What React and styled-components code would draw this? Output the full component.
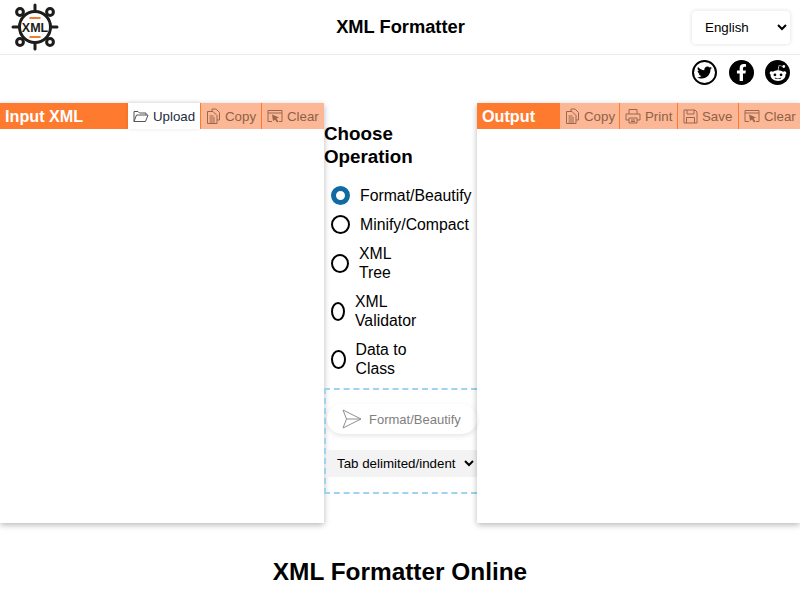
import styled, { createGlobalStyle } from 'styled-components'
import { FaTwitter, FaFacebookF, FaRedditAlien } from 'react-icons/fa'

const GlobalStyle = createGlobalStyle`
  html, body {
    margin: 0;
    padding: 0;
    background: #fff;
    font-family: "Liberation Sans", Arial, sans-serif;
    color: #000;
  }
  * {
    box-sizing: border-box;
  }
`

const Logo = () => (
  <svg width="48" height="48" viewBox="0 0 48 48">
    <g stroke="#1d1d1b" strokeWidth="3" strokeLinecap="round" fill="none">
      <line x1="24" y1="2" x2="24" y2="46" />
      <line x1="2" y1="24" x2="46" y2="24" />
      <line x1="9" y1="9" x2="39" y2="39" />
      <line x1="39" y1="9" x2="9" y2="39" />
      <circle cx="24" cy="24" r="15.500" fill="#fff" />
      <circle cx="9" cy="9" r="3.400" fill="#fff" />
      <circle cx="39" cy="9" r="3.400" fill="#fff" />
      <circle cx="9" cy="39" r="3.400" fill="#fff" />
      <circle cx="39" cy="39" r="3.400" fill="#fff" />
    </g>
    <rect x="18.500" y="14" width="11" height="2" fill="#f47a30" />
    <rect x="18.500" y="33" width="11" height="2" fill="#f47a30" />
    <text x="24" y="28.500" textAnchor="middle" fontFamily="Liberation Sans" fontWeight="700" fontSize="12.500" fill="#1d1d1b">XML</text>
  </svg>
)

const UploadIcon = () => (
  <svg width="16" height="14" viewBox="0 0 16 14" fill="none" stroke="#555" strokeWidth="1">
    <path d="M1 12.500V2.500h4l1.500 1.500H13v2" />
    <path d="M1 12.500L3.500 6h11.500l-2.500 6.500z" />
  </svg>
)

const CopyIcon = () => (
  <ToolGlyph width="15" height="16" viewBox="0 0 15 16">
    <path d="M6 3V1h4l3.500 3.500V12H11" />
    <path d="M1.500 3.500H7l4 4v8H1.500z" />
    <path d="M3.500 8h4M3.500 10h5.500M3.500 12h5.500M3.500 14h5.500" />
  </ToolGlyph>
)

const ClearIcon = () => (
  <ToolGlyph width="16" height="15" viewBox="0 0 16 15">
    <path d="M12 12.500h3v-11H1v11h4M1 4h14" />
    <path d="M5 5.500l7 3-2.500 1 2 3-1.500 1-2-3-2 1.500z" fill="#7a4c34" stroke="none" />
  </ToolGlyph>
)

const PrintIcon = () => (
  <ToolGlyph width="16" height="16" viewBox="0 0 16 16">
    <path d="M4 6V1.500h8V6" />
    <path d="M4 12H1V6h14v6h-3" />
    <path d="M4 10h8v5H4zM6 12h4M6 13.500h4" />
  </ToolGlyph>
)

const SaveIcon = () => (
  <ToolGlyph width="15" height="15" viewBox="0 0 15 15">
    <path d="M1 1h11l2 2v11H1z" />
    <path d="M4 1v4h7V1M3.500 14V8.500h8V14" />
  </ToolGlyph>
)

const SendIcon = () => (
  <svg width="20" height="20" viewBox="0 0 20 20" fill="none" stroke="#8f8f8f" strokeWidth="1">
    <path d="M1 1l18 9-18 9 3.500-9z" />
    <path d="M4.500 10H19" />
  </svg>
)

const operations = [
  { label: 'Format/Beautify', checked: true, radioWidth: 19 },
  { label: 'Minify/Compact', radioWidth: 19 },
  { label: 'XML Tree', radioWidth: 18, wrapAt: 50 },
  { label: 'XML Validator', radioWidth: 14, wrapAt: 70 },
  { label: 'Data to Class', radioWidth: 14.500, wrapAt: 70 },
]

const App = () => (
  <Page>
    <GlobalStyle />
    <Header>
      <LogoSlot>
        <Logo />
      </LogoSlot>
      <SiteTitle>XML Formatter</SiteTitle>
      <Language defaultValue="English">
        <option>English</option>
        <option>Español</option>
      </Language>
    </Header>
    <Socials>
      <Social $outline>
        <FaTwitter size={15} />
      </Social>
      <Social>
        <FaFacebookF size={17} />
      </Social>
      <Social>
        <FaRedditAlien size={18} />
      </Social>
    </Socials>
    <Workspace>
      <InputPanel>
        <PanelBar>
          <PanelLabel $w={128}>Input XML</PanelLabel>
          <UploadButton>
            <UploadIcon />
            Upload
          </UploadButton>
          <ToolButton $w={61}>
            <CopyIcon />
            Copy
          </ToolButton>
          <ToolButton $w={63}>
            <ClearIcon />
            Clear
          </ToolButton>
        </PanelBar>
      </InputPanel>
      <Operations>
        <OperationsTitle>Choose Operation</OperationsTitle>
        <OperationList>
          {operations.map(op => (
            <Operation key={op.label} $tall={!!op.wrapAt}>
              <Radio $checked={op.checked} $w={op.radioWidth} />
              <OperationName $wrapAt={op.wrapAt}>{op.label}</OperationName>
            </Operation>
          ))}
        </OperationList>
        <ActionBox>
          <RunButton>
            <SendIcon />
            Format/Beautify
          </RunButton>
          <Indent defaultValue="tab">
            <option value="tab">Tab delimited/indent</option>
            <option value="2">2 spaces</option>
          </Indent>
        </ActionBox>
      </Operations>
      <OutputPanel>
        <PanelBar>
          <PanelLabel $w={82}>Output</PanelLabel>
          <ToolButton $w={60}>
            <CopyIcon />
            Copy
          </ToolButton>
          <ToolButton $w={58}>
            <PrintIcon />
            Print
          </ToolButton>
          <ToolButton $w={61}>
            <SaveIcon />
            Save
          </ToolButton>
          <ToolButton $w={62}>
            <ClearIcon />
            Clear
          </ToolButton>
        </PanelBar>
      </OutputPanel>
    </Workspace>
    <PageHeading>XML Formatter Online</PageHeading>
  </Page>
)

export default App

const Page = styled.div`
  width: 800px;
  height: 600px;
  overflow: hidden;
`

const Header = styled.header`
  height: 55px;
  padding: 0 10px 0 11px;
  display: grid;
  grid-template-columns: 1fr auto 1fr;
  align-items: center;
  border-bottom: 1px solid #e3edf2;
`

const LogoSlot = styled.div`
  display: flex;
  align-items: center;
`

const SiteTitle = styled.h1`
  margin: 0;
  font-size: 18.300px;
  font-weight: 700;
`

const Language = styled.select`
  justify-self: end;
  width: 98px;
  height: 33px;
  padding-left: 9px;
  border: 0;
  border-radius: 4px;
  background: #fff;
  box-shadow: 0 0 4px rgba(0, 0, 0, 0.14);
  font-family: inherit;
  font-size: 13.330px;
`

const Socials = styled.div`
  height: 48px;
  padding: 5px 10px 0 0;
  display: flex;
  justify-content: flex-end;
  gap: 11.500px;
`

const Social = styled.a`
  width: 25px;
  height: 25px;
  border-radius: 50%;
  display: flex;
  align-items: center;
  justify-content: center;
  background: ${p => (p.$outline ? '#fff' : '#000')};
  color: ${p => (p.$outline ? '#000' : '#fff')};
  border: ${p => (p.$outline ? '2px solid #000' : '0')};
`

const Workspace = styled.main`
  height: 420px;
  display: grid;
  grid-template-columns: 324px 153px 323px;
`

const InputPanel = styled.section`
  box-shadow: 0 2px 6px rgba(0, 0, 0, 0.28);
`

const OutputPanel = styled(InputPanel)``

const PanelBar = styled.div`
  height: 26px;
  display: flex;
  align-items: stretch;
`

const PanelLabel = styled.div`
  width: ${p => p.$w}px;
  padding: 1px 0 0 5px;
  display: flex;
  align-items: center;
  background: #fd7a2f;
  color: #fff;
  font-size: 16.200px;
  font-weight: 700;
`

const ToolButton = styled.button`
  width: ${p => p.$w}px;
  padding: 0 0 0 5px;
  display: flex;
  align-items: center;
  gap: 4px;
  border: 0;
  border-left: 1px solid #fd7a2f;
  background: #fcb896;
  color: #8f6048;
  font-family: inherit;
  font-size: 13.300px;
`

const ToolGlyph = styled.svg`
  flex: none;
  fill: none;
  stroke: #7a4c34;
  stroke-width: 1;
  opacity: 0.75;
`

const UploadButton = styled(ToolButton)`
  width: 72px;
  border-left: 0;
  background: #fff;
  color: #1c2c40;
  box-shadow: 0 0 4px rgba(0, 0, 0, 0.1);
`

const Operations = styled.section`
  padding-top: 19px;
  display: flex;
  flex-direction: column;
`

const OperationsTitle = styled.h2`
  margin: 0;
  width: 110px;
  font-size: 18.800px;
  line-height: 23px;
  font-weight: 700;
`

const OperationList = styled.div`
  margin-top: 13px;
  padding-left: 7px;
  display: flex;
  flex-direction: column;
`

const Operation = styled.label`
  height: ${p => (p.$tall ? 48 : 29)}px;
  display: flex;
  align-items: center;
  gap: 10px;
  font-size: 15.800px;
  line-height: 19px;
`

const Radio = styled.span`
  width: ${p => p.$w}px;
  height: 19px;
  flex: none;
  border-radius: 50%;
  border: ${p => (p.$checked ? '5px solid #106ba3' : '2px solid #000')};
`

const OperationName = styled.span`
  width: ${p => (p.$wrapAt ? `${p.$wrapAt}px` : 'auto')};
  white-space: ${p => (p.$wrapAt ? 'normal' : 'nowrap')};
`

const ActionBox = styled.div`
  margin-top: 5px;
  height: 105.500px;
  padding-top: 14px;
  border: 2px dashed #9fd3ee;
  border-right: 0;
  display: flex;
  flex-direction: column;
`

const RunButton = styled.button`
  height: 30px;
  margin-left: 1px;
  padding: 0 0 0 15px;
  display: flex;
  align-items: center;
  gap: 7px;
  border: 0;
  border-radius: 15px;
  background: #fff;
  box-shadow: 0 2px 5px rgba(0, 0, 0, 0.1);
  color: #808080;
  font-family: inherit;
  font-size: 13px;
`

const Indent = styled.select`
  margin: 16px 0 0 1px;
  width: 150px;
  height: 27px;
  padding-left: 6px;
  border: 0;
  background: #f3f3f3;
  font-family: inherit;
  font-size: 13.330px;
`

const PageHeading = styled.h2`
  margin: 33px 0 0;
  text-align: center;
  font-size: 24.400px;
  line-height: 32px;
  font-weight: 700;
`
